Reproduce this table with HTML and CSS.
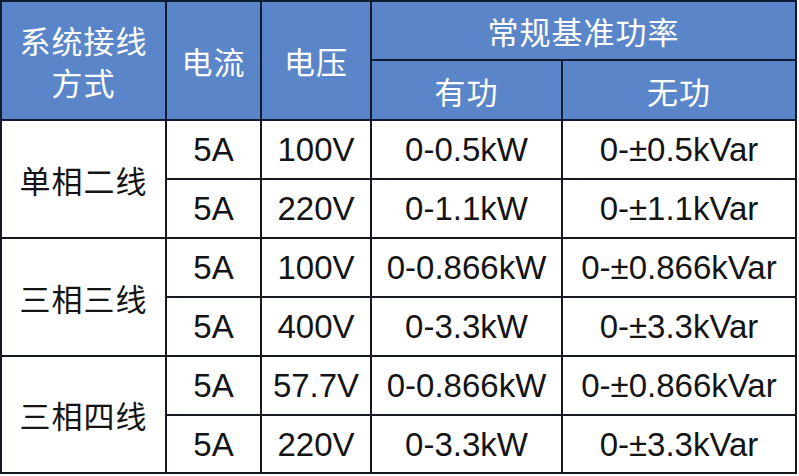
FILE: index.html
```html
<!DOCTYPE html>
<html lang="zh">
<head>
<meta charset="utf-8">
<title>常规基准功率</title>
<link rel="stylesheet" href="styles.css">
</head>
<body>
<table class="spec">
  <colgroup>
    <col class="c-mode">
    <col class="c-cur">
    <col class="c-volt">
    <col class="c-p">
    <col class="c-q">
  </colgroup>
  <thead>
    <tr class="h1">
      <th rowspan="2" class="two-line">系统接线<br>方式</th>
      <th rowspan="2">电流</th>
      <th rowspan="2">电压</th>
      <th colspan="2">常规基准功率</th>
    </tr>
    <tr class="h2">
      <th>有功</th>
      <th>无功</th>
    </tr>
  </thead>
  <tbody>
    <tr>
      <td rowspan="2" class="mode">单相二线</td>
      <td>5A</td><td>100V</td><td>0-0.5kW</td><td>0-±0.5kVar</td>
    </tr>
    <tr>
      <td>5A</td><td>220V</td><td>0-1.1kW</td><td>0-±1.1kVar</td>
    </tr>
    <tr>
      <td rowspan="2" class="mode">三相三线</td>
      <td>5A</td><td>100V</td><td>0-0.866kW</td><td>0-±0.866kVar</td>
    </tr>
    <tr>
      <td>5A</td><td>400V</td><td>0-3.3kW</td><td>0-±3.3kVar</td>
    </tr>
    <tr>
      <td rowspan="2" class="mode">三相四线</td>
      <td>5A</td><td>57.7V</td><td>0-0.866kW</td><td>0-±0.866kVar</td>
    </tr>
    <tr class="last">
      <td>5A</td><td>220V</td><td>0-3.3kW</td><td>0-±3.3kVar</td>
    </tr>
  </tbody>
</table>
</body>
</html>
```

FILE: styles.css
```css
html, body {
  margin: 0;
  padding: 0;
  background: #ffffff;
}

.spec {
  border-collapse: collapse;
  table-layout: fixed;
  width: 797px;
  font-family: "Liberation Sans", Arial, "Noto Sans CJK SC", sans-serif;
  color: #141414;
}

.c-mode { width: 165px; }
.c-cur { width: 95px; }
.c-volt { width: 110px; }
.c-p { width: 191px; }
.c-q { width: 234px; }

.spec th,
.spec td {
  border: 2px solid #141820;
  padding: 0;
  text-align: center;
  vertical-align: middle;
  white-space: nowrap;
}

.spec th {
  background: #5a86c9;
  color: #ffffff;
  font-family: "Noto Sans CJK SC", sans-serif;
  font-weight: 400;
  font-size: 31px;
  letter-spacing: 1px;
  border-color: #0f1a33;
}

.h1 { height: 59px; }
.h2 { height: 60px; }

.two-line {
  line-height: 42px;
}

.spec tbody tr { height: 59px; }
.spec tbody tr.last { height: 58px; }

.spec td {
  font-size: 33px;
  line-height: 1;
}

.spec td.mode {
  font-family: "Noto Sans CJK SC", sans-serif;
  font-size: 31px;
  letter-spacing: 1px;
  font-weight: 400;
}
```
